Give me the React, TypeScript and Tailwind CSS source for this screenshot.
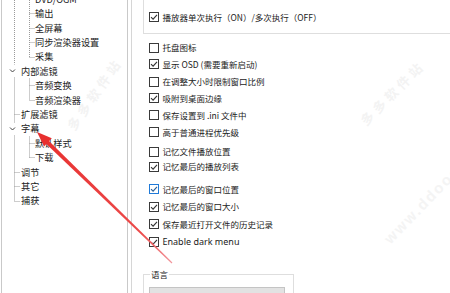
import React from "react";

type TreeItem = { label: string; level: 0 | 1; expanded?: boolean };

const tree: TreeItem[] = [
  { label: "DVD/OGM", level: 1 },
  { label: "输出", level: 1 },
  { label: "全屏幕", level: 1 },
  { label: "同步渲染器设置", level: 1 },
  { label: "采集", level: 1 },
  { label: "内部滤镜", level: 0, expanded: true },
  { label: "音频变换", level: 1 },
  { label: "音频渲染器", level: 1 },
  { label: "扩展滤镜", level: 0 },
  { label: "字幕", level: 0, expanded: true },
  { label: "默认样式", level: 1 },
  { label: "下载", level: 1 },
  { label: "调节", level: 0 },
  { label: "其它", level: 0 },
  { label: "捕获", level: 0 },
];

type Opt = { label: string; checked: boolean; mt: string; focus?: boolean; latin?: boolean };

const opts: Opt[] = [
  { label: "托盘图标", checked: false, mt: "mt-[5px]" },
  { label: "显示 OSD (需要重新启动)", checked: true, mt: "mt-[-0.5px]" },
  { label: "在调整大小时限制窗口比例", checked: false, mt: "mt-[0.5px]" },
  { label: "吸附到桌面边缘", checked: true, mt: "mt-[-0.5px]" },
  { label: "保存设置到 .ini 文件中", checked: false, mt: "mt-0" },
  { label: "高于普通进程优先级", checked: false, mt: "mt-0" },
  { label: "记忆文件播放位置", checked: false, mt: "mt-[2.5px]" },
  { label: "记忆最后的播放列表", checked: true, mt: "mt-[-2px]" },
  { label: "记忆最后的窗口位置", checked: true, focus: true, mt: "mt-[5.5px]" },
  { label: "记忆最后的窗口大小", checked: true, mt: "mt-[0.5px]" },
  { label: "保存最近打开文件的历史记录", checked: true, mt: "mt-[0.5px]" },
  { label: "Enable dark menu", checked: true, latin: true, mt: "mt-[0.5px]" },
];

const ROW = 14.4;
const FIRST = -1; // centre of first tree row

function Check({ checked, focus }: { checked: boolean; focus?: boolean }) {
  const c = focus ? "#1f7ad8" : "#3a3a3a";
  return (
    <svg width="10" height="10" viewBox="0 0 10 10" className="shrink-0">
      <rect x="0.5" y="0.5" width="9" height="9" fill="#fff" stroke={c} />
      {checked && (
        <path d="M2 5.1 L4.1 7.2 L8 2.8" fill="none" stroke={focus ? "#2b5f96" : "#333"} strokeWidth="1.1" />
      )}
    </svg>
  );
}

function TreeLines() {
  const cy = (i: number) => Math.round(FIRST + ROW * i) + 0.5;
  const rx = 12.5; // page x 14.5
  const cx = 27.5; // page x 29.5
  const stubs: JSX.Element[] = [];
  tree.forEach((t, i) => {
    if (t.level === 1)
      stubs.push(<line key={i} x1={cx} y1={cy(i)} x2={cx + 5} y2={cy(i)} />);
    else if (!t.expanded)
      stubs.push(<line key={i} x1={rx} y1={cy(i)} x2={rx + 6} y2={cy(i)} />);
  });
  return (
    <svg className="pointer-events-none absolute left-0 top-0" width="125" height="293">
      <g stroke="#9a9a9a" strokeDasharray="1 1" strokeWidth="1">
        <line x1={rx} y1={-10} x2={rx} y2={cy(5) - 7} />
        <line x1={rx} y1={cy(5) + 6} x2={rx} y2={cy(9) - 7} />
        <line x1={rx} y1={cy(9) + 6} x2={rx} y2={cy(14)} />
        <line x1={cx} y1={-10} x2={cx} y2={cy(4)} />
        <line x1={cx} y1={cy(5) + 7} x2={cx} y2={cy(7)} />
        <line x1={cx} y1={cy(9) + 7} x2={cx} y2={cy(11)} />
        {stubs}
      </g>
      <g fill="none" stroke="#444" strokeWidth="1">
        <polyline points={`8,${cy(5) - 2} 10.5,${cy(5) + 0.5} 13,${cy(5) - 2}`} />
        <polyline points={`8,${cy(9) - 2} 10.5,${cy(9) + 0.5} 13,${cy(9) - 2}`} />
      </g>
    </svg>
  );
}

function Arrow() {
  return (
    <svg className="pointer-events-none absolute left-0 top-0" width="450" height="293">
      <defs>
        <linearGradient id="fade" x1="44" y1="139" x2="174" y2="264" gradientUnits="userSpaceOnUse">
          <stop offset="0" stopColor="#e8302f" />
          <stop offset="0.75" stopColor="#ec4b4b" />
          <stop offset="1" stopColor="#f29aa0" />
        </linearGradient>
      </defs>
      <polygon points="42.6,140.4 45.4,137.6 172.4,262.6 171.6,263.4" fill="url(#fade)" />
      <polygon points="37,132 44,146.5 51.8,138.3" fill="#e8302f" />
    </svg>
  );
}

export default function App() {
  return (
    <div className="relative h-[293px] w-[450px] overflow-hidden bg-white font-['Noto_Sans_CJK_SC',sans-serif] text-[#1b1b1b]">
      {/* watermarks */}
      <div className="pointer-events-none absolute left-[52px] top-[84px] rotate-[-55deg] text-[13px] font-bold tracking-[4px] text-[#f3f3f3]">
        多多软件站
      </div>
      <div className="pointer-events-none absolute left-[350px] top-[83px] rotate-[-45deg] text-[13px] font-bold tracking-[4px] text-[#f3f3f3]">
        多多软件站
      </div>
      <div className="pointer-events-none absolute left-[365px] top-[178px] rotate-[-46deg] font-['Liberation_Sans',sans-serif] text-[15px] font-bold tracking-[2px] text-[#f4f4f4]">
        www.ddooo.com
      </div>

      <div className="flex h-full">
        <aside className="relative ml-[1px] h-full w-[127px] border-x border-[#c9c9c9]">
          <TreeLines />
          <div className="mt-[-8.2px] flex flex-col text-[9.2px]">
            {tree.map((t) => (
              <div
                key={t.label}
                className={`flex h-[14.4px] items-center whitespace-nowrap leading-[14.4px] ${
                  t.level === 0 ? "pl-[19px]" : "pl-[33px]"
                }`}
              >
                {t.label}
              </div>
            ))}
          </div>
        </aside>
        <div className="ml-[3px] h-full w-px bg-[#d6d6d6]" />

        <main className="flex min-w-0 flex-1 flex-col pl-[11px] text-[8.5px]">
          <div className="mt-[-10px] flex h-[44px] w-[330px] shrink-0 items-end border border-[#dedede] pb-[10px] pl-[5px]">
            <div className="flex h-[12px] items-center gap-[3.5px] whitespace-nowrap">
              <Check checked />
              <span>播放器单次执行（ON）/多次执行（OFF）</span>
            </div>
          </div>

          <div className="flex flex-col pl-[6px]">
            {opts.map((o) => (
              <div key={o.label} className={`flex h-[17px] items-center gap-[3.5px] whitespace-nowrap ${o.mt}`}>
                <Check checked={o.checked} focus={o.focus} />
                <span className={o.latin ? "font-['Noto_Sans',sans-serif] text-[9px]" : ""}>{o.label}</span>
              </div>
            ))}
          </div>

          <div className="relative mt-[24px] h-[40px] w-[151px] shrink-0 border border-[#dedede]">
            <span className="absolute left-[6px] top-[-7px] bg-white px-px leading-[13px]">语言</span>
            <div className="ml-[5px] mt-[12px] h-[20px] w-[136px] border border-[#c4c4c4] bg-[#e2e2e2]" />
          </div>
        </main>
      </div>

      <Arrow />
    </div>
  );
}
